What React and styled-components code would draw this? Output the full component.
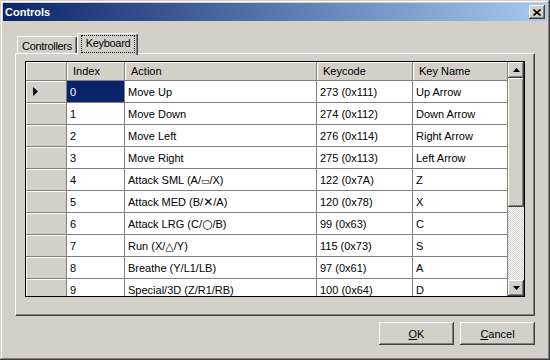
import React from "react";
import styled, { createGlobalStyle } from "styled-components";

const GlobalStyle = createGlobalStyle`
  html, body {
    margin: 0;
    padding: 0;
    background: #d4d0c8;
  }
  * {
    box-sizing: border-box;
  }
`;

const raised = `
  box-shadow: inset -1px -1px #404040, inset 1px 1px #fff,
    inset -2px -2px #808080, inset 2px 2px #d4d0c8;
`;

const Window = styled.div`
  width: 550px;
  height: 360px;
  background: #d4d0c8;
  padding: 3px;
  display: flex;
  flex-direction: column;
  font-family: "Liberation Sans", Arial, sans-serif;
  font-size: 11px;
  color: #000;
  box-shadow: inset -1px -1px #404040, inset 1px 1px #d4d0c8,
    inset -2px -2px #808080, inset 2px 2px #fff;
`;

const TitleBar = styled.div`
  height: 18px;
  display: flex;
  align-items: center;
  justify-content: space-between;
  padding: 0 2px;
  background: linear-gradient(90deg, #0a246a 0%, #a6caf0 100%);
`;

const Title = styled.span`
  color: #fff;
  font-weight: bold;
  font-size: 11px;
`;

const CloseButton = styled.div`
  width: 16px;
  height: 14px;
  background: #d4d0c8;
  display: flex;
  align-items: center;
  justify-content: center;
  ${raised}
`;

const Body = styled.div`
  flex: 1;
  display: flex;
  flex-direction: column;
  padding: 12px 12px 0 12px;
`;

const TabStrip = styled.div`
  height: 20px;
  display: flex;
  align-items: flex-end;
  padding-left: 2px;
`;

const Tab = styled.div`
  position: relative;
  z-index: ${(p) => (p.$active ? 1 : 0)};
  width: ${(p) => p.$width}px;
  height: ${(p) => (p.$active ? 22 : 17)}px;
  margin-bottom: ${(p) => (p.$active ? -2 : 0)}px;
  background: #d4d0c8;
  border-radius: 2px 2px 0 0;
  border-top: 1px solid #fff;
  border-left: 1px solid #fff;
  border-right: 1px solid #404040;
  box-shadow: inset -1px 0 #808080;
  display: flex;
  align-items: ${(p) => (p.$active ? "flex-start" : "center")};
  justify-content: center;
  padding-top: 1px;
  letter-spacing: -0.3px;
`;

const FocusBox = styled.span`
  display: block;
  width: 54px;
  height: 18px;
  line-height: 15px;
  text-align: center;
  border: 1px dotted #000;
  margin-left: 1px;
`;

const Panel = styled.div`
  height: 263px;
  border-top: 1px solid #fff;
  border-left: 1px solid #fff;
  border-right: 1px solid #404040;
  border-bottom: 1px solid #404040;
  box-shadow: inset -1px -1px #808080;
  padding: 7px 9px 0 9px;
`;

const Grid = styled.div`
  width: 500px;
  height: 236px;
  border: 1px solid #000;
  display: flex;
  background: #fff;
`;

const TableArea = styled.div`
  flex: 1;
  overflow: hidden;
`;

const Row = styled.div`
  display: grid;
  grid-template-columns: 41px 58px 192px 96px 95px;
  height: ${(p) => (p.$header ? 19 : 22)}px;
`;

const HeadCell = styled.div`
  background: #d4d0c8;
  border-right: 1px solid #808080;
  border-bottom: 1px solid #808080;
  box-shadow: inset 1px 1px #fff;
  padding-left: 6px;
  line-height: 18px;
  white-space: nowrap;
`;

const RowHeadCell = styled.div`
  background: #d4d0c8;
  border-right: 1px solid #808080;
  border-bottom: 1px solid #808080;
  box-shadow: inset 1px 1px #fff;
  display: flex;
  align-items: center;
  padding-left: 7px;
`;

const Cell = styled.div`
  background: ${(p) => (p.$selected ? "#0a246a" : "#fff")};
  color: ${(p) => (p.$selected ? "#fff" : "#000")};
  border-right: 1px solid #808080;
  border-bottom: 1px solid #808080;
  padding-left: 3px;
  line-height: 22px;
  white-space: nowrap;
  overflow: hidden;
`;

const Scrollbar = styled.div`
  width: 16px;
  display: flex;
  flex-direction: column;
`;

const ScrollButton = styled.div`
  height: 16px;
  background: #d4d0c8;
  display: flex;
  align-items: center;
  justify-content: center;
  ${raised}
`;

const Thumb = styled.div`
  height: 129px;
  background: #d4d0c8;
  ${raised}
`;

const Track = styled.div`
  flex: 1;
  background-color: #fff;
  background-image: repeating-conic-gradient(#d4d0c8 0% 25%, #fff 0% 50%);
  background-size: 2px 2px;
`;

const ButtonRow = styled.div`
  display: flex;
  justify-content: flex-end;
  gap: 6px;
  margin-top: 6px;
`;

const Button = styled.div`
  width: 75px;
  height: 23px;
  background: #d4d0c8;
  display: flex;
  align-items: center;
  justify-content: center;
  ${raised}
  u {
    text-decoration: underline;
  }
`;

const Sym = styled.span`
  font-family: "DejaVu Sans", sans-serif;
  font-size: ${(p) => p.$size || 11}px;
`;

const rows = [
  ["0", "Move Up", "273 (0x111)", "Up Arrow"],
  ["1", "Move Down", "274 (0x112)", "Down Arrow"],
  ["2", "Move Left", "276 (0x114)", "Right Arrow"],
  ["3", "Move Right", "275 (0x113)", "Left Arrow"],
  ["4", <>Attack SML (A/<Sym $size={9}>▭</Sym>/X)</>, "122 (0x7A)", "Z"],
  ["5", <>Attack MED (B/<Sym $size={12}>✕</Sym>/A)</>, "120 (0x78)", "X"],
  ["6", <>Attack LRG (C/<Sym $size={12}>○</Sym>/B)</>, "99 (0x63)", "C"],
  ["7", <>Run (X/<Sym $size={11}>△</Sym>/Y)</>, "115 (0x73)", "S"],
  ["8", "Breathe (Y/L1/LB)", "97 (0x61)", "A"],
  ["9", "Special/3D (Z/R1/RB)", "100 (0x64)", "D"],
];

const Arrow = ({ dir }) => (
  <svg width="7" height="4" viewBox="0 0 7 4">
    {dir === "up" ? (
      <polygon points="3.5,0 7,4 0,4" fill="#000" />
    ) : (
      <polygon points="0,0 7,0 3.5,4" fill="#000" />
    )}
  </svg>
);

const App = () => {
  return (
    <>
      <GlobalStyle />
      <Window>
        <TitleBar>
          <Title>Controls</Title>
          <CloseButton>
            <svg width="8" height="7" viewBox="0 0 8 7">
              <path d="M0.5 0.5 L7.5 6.5 M7.5 0.5 L0.5 6.5" stroke="#000" strokeWidth="1.6" />
            </svg>
          </CloseButton>
        </TitleBar>
        <Body>
          <TabStrip>
            <Tab $width={60}>Controllers</Tab>
            <Tab $active $width={61}>
              <FocusBox>Keyboard</FocusBox>
            </Tab>
          </TabStrip>
          <Panel>
            <Grid>
              <TableArea>
                <Row $header>
                  <HeadCell />
                  <HeadCell>Index</HeadCell>
                  <HeadCell>Action</HeadCell>
                  <HeadCell>Keycode</HeadCell>
                  <HeadCell>Key Name</HeadCell>
                </Row>
                {rows.map((r, i) => (
                  <Row key={i}>
                    <RowHeadCell>
                      {i === 0 && (
                        <svg width="5" height="9" viewBox="0 0 5 9">
                          <polygon points="0,0 5,4.5 0,9" fill="#000" />
                        </svg>
                      )}
                    </RowHeadCell>
                    <Cell $selected={i === 0}>{r[0]}</Cell>
                    <Cell>{r[1]}</Cell>
                    <Cell>{r[2]}</Cell>
                    <Cell>{r[3]}</Cell>
                  </Row>
                ))}
              </TableArea>
              <Scrollbar>
                <ScrollButton>
                  <Arrow dir="up" />
                </ScrollButton>
                <Thumb />
                <Track />
                <ScrollButton>
                  <Arrow dir="down" />
                </ScrollButton>
              </Scrollbar>
            </Grid>
          </Panel>
          <ButtonRow>
            <Button>
              <span><u>O</u>K</span>
            </Button>
            <Button>
              <span><u>C</u>ancel</span>
            </Button>
          </ButtonRow>
        </Body>
      </Window>
    </>
  );
};

export default App;
